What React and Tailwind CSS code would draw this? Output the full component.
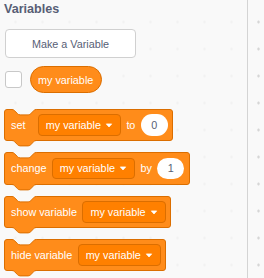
import React from "react";

const S = 0.675;
const U = 1 / S; // 1px in scratch units
const CURVE = "c2,0 3,1 4,2 l4,4 c1,1 2,2 4,2 h12 c2,0 3,-1 4,-2 l4,-4 c1,-1 2,-2 4,-2";

function Notch() {
  const o = U / 2;
  return (
    <svg
      className="absolute left-[7.1px] top-[-1px] overflow-visible"
      width={36 * S}
      height={9 * S}
      viewBox="0 0 36 9"
    >
      <path d={`M0,${o} ${CURVE} L36,-0.2 L0,-0.2 Z`} fill="#f9f9f9" />
      <path d={`M0,${o} ${CURVE}`} fill="none" stroke="#db6e00" strokeWidth={U} />
    </svg>
  );
}

function Tab() {
  const o = U / 2;
  return (
    <svg
      className="absolute left-[7.1px] top-full overflow-visible"
      width={36 * S}
      height={9 * S}
      viewBox="0 0 36 9"
    >
      <path
        d={`M0,-0.05 L0,${o} c2,0 3,1 4,2 l4,4 c1,1 2,2 4,2 h12 c2,0 3,-1 4,-2 l4,-4 c1,-1 2,-2 4,-2 L36,-0.05 Z`}
        fill="#ff8c1a"
      />
      <path
        d={`M0,${o} c2,0 3,1 4,2 l4,4 c1,1 2,2 4,2 h12 c2,0 3,-1 4,-2 l4,-4 c1,-1 2,-2 4,-2`}
        fill="none"
        stroke="#db6e00"
        strokeWidth={U}
      />
    </svg>
  );
}

function Block({ children }) {
  return (
    <div className="relative flex h-[32.4px] w-fit items-center gap-[5.4px] rounded-[3px] border border-[#db6e00] bg-[#ff8c1a] pl-[6px] pr-[4.5px] text-white">
      <Notch />
      <Tab />
      {children}
    </div>
  );
}

function Dropdown() {
  return (
    <div className="flex h-[21.6px] items-center rounded-[4px] border border-[#db6e00] bg-[#ff8000] pl-[7px] pr-[7px] text-white">
      <span>my variable</span>
      <svg className="ml-[4px]" width="8" height="8" viewBox="0 0 8 8">
        <path
          d="M1.3 2.9 L6.7 2.9 L4 6 Z"
          fill="#fff"
          stroke="#fff"
          strokeWidth="0.7"
          strokeLinejoin="round"
        />
      </svg>
    </div>
  );
}

function Num({ v }) {
  return (
    <div className="flex h-[21.6px] w-[27px] items-center justify-center rounded-full bg-white text-[#575e75]">
      {v}
    </div>
  );
}

export default function App() {
  return (
    <div className="flex h-[278px] w-[264px] overflow-hidden bg-[#f9f9f9] bg-[radial-gradient(circle,#d6d6d6_1px,transparent_1.5px)] bg-size-[27px_27px] bg-position-[2px_8.5px] font-['Liberation_Sans',Arial,sans-serif] text-[10.8px]">
      <div className="flex h-full w-[248px] shrink-0 flex-col border-r border-[#d4d4d4] bg-[#f9f9f9]/80">
        <div className="ml-[4px] pt-[1.5px] text-[12.6px] font-bold leading-[15px] text-[#575e75]">
          Variables
        </div>
        <div className="ml-[5px] mt-[12.8px] flex h-[29px] w-[131px] items-center justify-center rounded-[4px] border border-[#d0d0d0] bg-white text-[#575e75]">
          Make a Variable
        </div>
        <div className="ml-[5px] mt-[8.2px] flex items-center gap-[7.7px]">
          <div className="h-[17px] w-[17px] rounded-[3px] border border-[#c8c8c8] bg-white" />
          <div className="flex h-[27px] items-center rounded-full border border-[#db6e00] bg-[#ff8c1a] px-[7.4px] text-white">
            my variable
          </div>
        </div>
        <div className="ml-[4px] mt-[15.5px] flex flex-col gap-[10.9px]">
          <Block>
            <span className="min-w-[21.4px]">set</span>
            <Dropdown />
            <span>to</span>
            <Num v="0" />
          </Block>
          <Block>
            <span>change</span>
            <Dropdown />
            <span>by</span>
            <Num v="1" />
          </Block>
          <Block>
            <span>show variable</span>
            <Dropdown />
          </Block>
          <Block>
            <span>hide variable</span>
            <Dropdown />
          </Block>
        </div>
      </div>
    </div>
  );
}
